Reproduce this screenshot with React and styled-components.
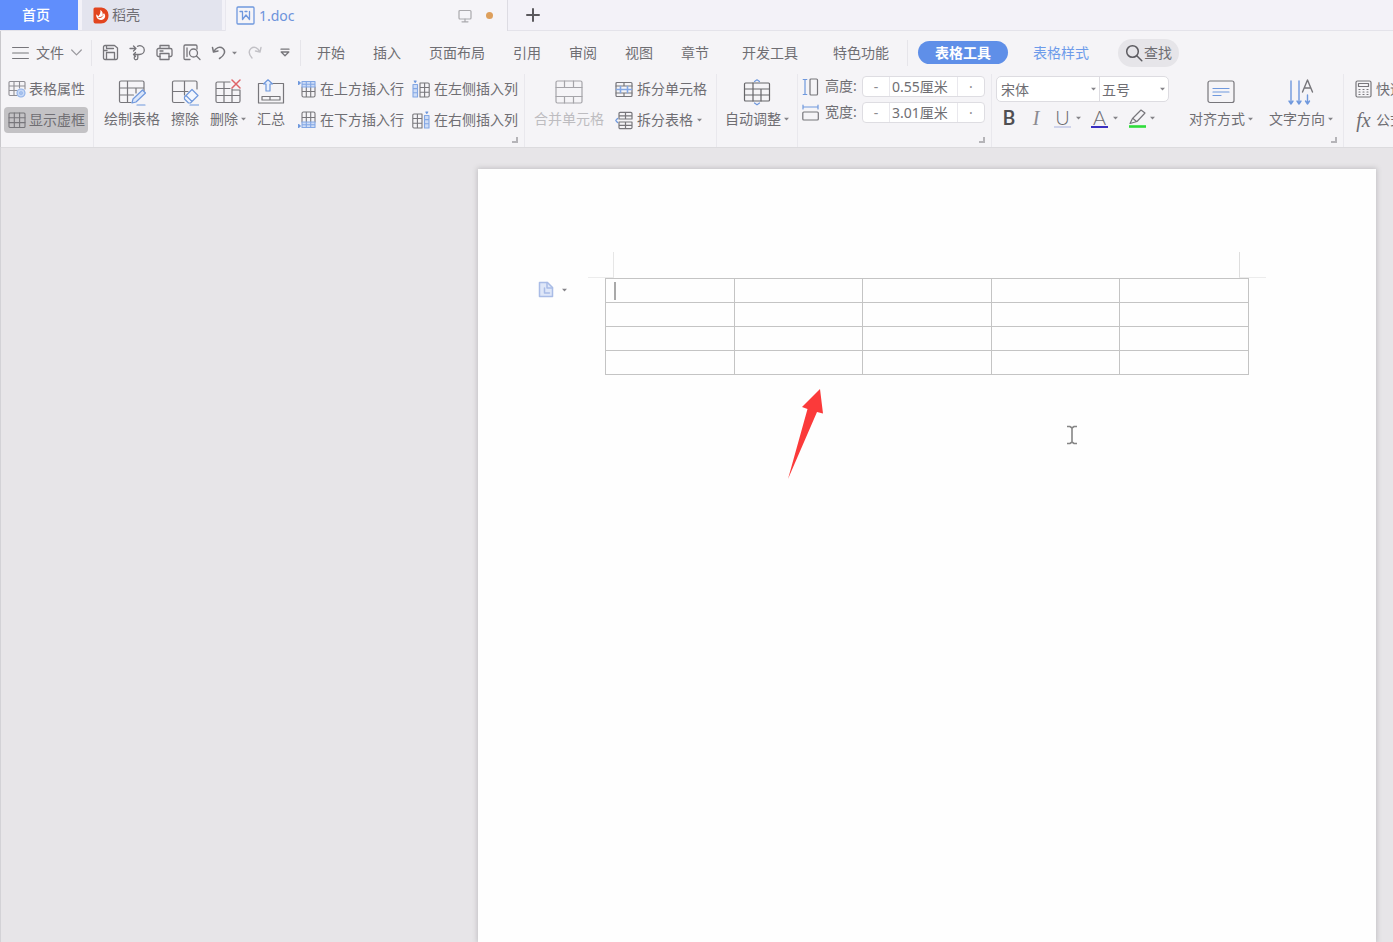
import React from 'react'
import styled, { createGlobalStyle, css } from 'styled-components'

const GlobalStyle = createGlobalStyle`
    * {
        box-sizing: border-box;
    }

    body {
        margin: 0;
        overflow: hidden;
        background-color: #e7e5e8;
    }

    body, button, input, select {
        font-family: "Noto Sans", "Noto Sans CJK SC", sans-serif;
        font-size: 14px;
        color: #6f6e73;
    }

    button {
        padding: 0;
        border: none;
        background: none;
        line-height: 20px;
        white-space: nowrap;
    }
`

const Shell = styled.div`
    display: flex;
    flex-direction: column;
    height: 100vh;
    overflow: hidden;
`

/* ---------- window tabs ---------- */

const TabBar = styled.nav`
    display: flex;
    flex: none;
    height: 31px;
    background-color: #f3f2f8;
    border-bottom: 1px solid #e4e3ea;
`

const HomeTab = styled.button`
    width: 78px;
    padding-right: 6px;
    background-color: #608efc;
    color: white;
    font-weight: 500;
`

const DocerTab = styled.button`
    display: flex;
    align-items: center;
    gap: 3px;
    width: 140px;
    margin-left: 4px;
    padding-left: 11px;
    background-color: #e3e4ee;
`

const FileTab = styled.div`
    display: flex;
    align-items: center;
    width: 283px;
    height: 31px;
    margin-left: 3px;
    padding: 0 14px 0 10px;
    background-color: #f5f4f8;
    border-left: 1px solid #e8e7ee;
    border-right: 1px solid #dddce3;

    button {
        display: flex;
        align-items: center;
        gap: 4px;
        margin-right: auto;
        color: #6d93dc;
    }
`

const UnsavedDot = styled.span`
    width: 7px;
    height: 7px;
    margin-left: 14px;
    border-radius: 50%;
    background-color: #dd9f5c;
`

const NewTab = styled.button`
    display: flex;
    align-items: center;
    padding: 0 18px;
`

/* ---------- menu row ---------- */

const MenuRow = styled.div`
    display: flex;
    flex: none;
    align-items: center;
    height: 43px;
    padding-left: 11px;
    background-color: #f5f4f7;
    border-left: 1px solid #c9c8cc;
`

const FileMenu = styled.button`
    display: flex;
    align-items: center;
    gap: 7px;
    margin-right: 9px;
`

const Divider = styled.span`
    width: 1px;
    height: 26px;
    background-color: #e6e5ea;
`

const QuickAccess = styled.div`
    display: flex;
    align-items: center;
    gap: 10px;
    padding: 0 10px;

    button {
        display: flex;
        align-items: center;
        gap: 5px;
    }
    button:last-child {
        margin-left: 8px;
    }
`

const MenuTabs = styled.div`
    display: flex;
    align-items: center;
    gap: 28px;
    padding-left: 16px;
`

const MoreTabs = styled(MenuTabs)`
    gap: 35px;
    padding: 0 18px 0 33px;
`

const ActiveTab = styled.button`
    height: 23px;
    margin-left: 10px;
    padding: 0 17px;
    border-radius: 12px;
    background-color: #5f8fe8;
    color: white;
    font-weight: 700;
`

const StyleTab = styled.button`
    margin: 0 29px 0 25px;
    color: #6d9bea;
`

const SearchButton = styled.button`
    display: flex;
    align-items: center;
    gap: 1px;
    height: 28px;
    padding: 0 7px;
    border-radius: 14px;
    background-color: #e6e5e9;
`

/* ---------- ribbon ---------- */

const Ribbon = styled.div`
    display: flex;
    flex: none;
    height: 74px;
    background-color: #f5f4f7;
    border-left: 1px solid #c9c8cc;
    border-bottom: 1px solid #dcdbde;
`

const Group = styled.section`
    display: flex;
    flex: none;
    flex-direction: column;
    padding: 2px ${p => p.$right || 6}px 0 ${p => p.$left || 8}px;
    border-right: 1px solid #e9e8ed;
`

const GroupBody = styled.div`
    display: flex;
    gap: ${p => p.$gap || 11}px;
    height: 57px;
    padding-right: ${p => p.$end || 0}px;
`

const Columns = styled.div`
    display: flex;
    gap: ${p => p.$gap || 8}px;
    padding-left: 2px;
`

const Launcher = styled.button`
    align-self: flex-end;
    width: 6px;
    height: 6px;
    margin-top: 4px;
    border-right: 2px solid #b5b4b8;
    border-bottom: 2px solid #b5b4b8;
`

const Stack = styled.div`
    display: flex;
    flex-direction: column;
    gap: 5px;
`

const SmallButton = styled.button`
    display: flex;
    align-items: center;
    gap: 4px;
    height: 26px;

    ${p => p.$padded && css`
        gap: 3px;
        padding: 0 3px 0 4px;
        border-radius: 4px;
    `}
    ${p => p.$pressed && css`
        background-color: #c3c2c5;
    `}
`

const BigButton = styled.button`
    display: flex;
    flex-direction: column;
    align-items: center;
    gap: 3px;
    padding-top: 3px;

    &:disabled {
        color: #bdbcc0;
    }
`

const Label = styled.span`
    display: flex;
    align-items: center;
    gap: 3px;
`

const SizeRow = styled.div`
    display: flex;
    align-items: center;
    height: 21px;

    label {
        width: 37px;
        margin-left: 6px;
        padding-bottom: 2px;
        line-height: 20px;
        white-space: nowrap;
    }
`

const Spinner = styled.div`
    display: flex;
    width: 123px;
    height: 21px;
    border: 1px solid #dedde2;
    border-radius: 4px;
    background-color: white;
    overflow: hidden;

    button {
        width: 26px;
        line-height: 18px;
        color: #8d8c90;
    }

    input {
        flex: 1;
        min-width: 0;
        padding: 0 2px 2px;
        border: 1px solid #e9e8ed;
        border-width: 0 1px;
        outline: none;
    }
`

const FontBoxes = styled.div`
    display: flex;
    height: 26px;
    border: 1px solid #dddce1;
    border-radius: 5px;
    background-color: white;
    overflow: hidden;
`

const SelectBox = styled.div`
    display: flex;
    align-items: center;
    width: ${p => p.$width}px;
    padding-right: 3px;

    & + & {
        border-left: 1px solid #dddce1;
    }

    select {
        flex: 1;
        min-width: 0;
        padding: 0 ${p => p.$inset}px;
        border: none;
        outline: none;
        appearance: none;
        background: none;
    }
`

const FormatRow = styled.div`
    display: flex;
    align-items: center;
    height: 22px;
`

const FormatButton = styled.button`
    display: flex;
    align-items: center;
    width: ${p => (p.$menu ? 37 : 27)}px;
    height: 22px;
`

const Glyph = styled.span`
    width: 26px;
    text-align: center;
    line-height: 22px;
    font-size: 20px;
    font-weight: ${p => (p.$bold ? 500 : 400)};
    font-family: ${p => (p.$serif ? '"Liberation Serif", serif' : 'Roboto, sans-serif')};
    font-style: ${p => (p.$serif ? 'italic' : 'normal')};
    color: ${p => (p.$bold ? '#4f4e52' : '#8b8a90')};
`

const Underlined = styled.span`
    width: 17px;
    height: 20px;
    margin: 0 5px 0 4px;
    border-bottom: 2px solid ${p => p.$color};
    text-align: center;
    font-family: Lato, sans-serif;
    font-size: 20px;
    font-weight: 300;
    line-height: 18px;
    color: #6c6b71;
`

const Fx = styled.span`
    width: 17px;
    font-family: "Liberation Serif", serif;
    font-style: italic;
    font-size: 20px;
`

/* ---------- document ---------- */

const Canvas = styled.main`
    display: flex;
    flex: 1;
    justify-content: flex-end;
    padding: 21px 17px 0 0;
    border-left: 1px solid #d3d2d6;
    background-color: #e7e5e8;
`

const Page = styled.article`
    position: relative;
    width: 898px;
    padding: 83px 110px 0;
    background-color: #fefefe;
    box-shadow: 0 0 5px 1px #c2c1c4;
`

const CropMarks = styled.div`
    display: flex;
    justify-content: space-between;

    span {
        width: 26px;
        height: 26px;
        border-bottom: 1px solid #ececec;
    }
    span:first-child {
        border-right: 1px solid #e6e6e6;
    }
    span:last-child {
        width: 27px;
        border-left: 1px solid #dedede;
    }
`

const TableArea = styled.div`
    position: relative;
    margin: 0 17px;
`

const DocTable = styled.table`
    width: 100%;
    table-layout: fixed;
    border-collapse: collapse;

    tr {
        height: 24px;
    }

    td {
        padding: 0 8px;
        border: 1px solid #c4c4c4;
    }
`

const TextCaret = styled.span`
    display: block;
    width: 2px;
    height: 18px;
    background-color: #a9a9a9;
`

const PasteOptions = styled.button`
    position: absolute;
    top: 3px;
    left: -67px;
    display: flex;
    align-items: center;
    gap: 8px;
`

const Overlay = styled.svg`
    position: absolute;
    top: ${p => p.$top}px;
    left: ${p => p.$left}px;
`

/* ---------- icons ---------- */

const Icon = ({ w, h, children, color = '#77767b', width = 1.2 }) => (
    <svg width={w} height={h} viewBox={`0 0 ${w} ${h}`} fill="none" stroke={color} strokeWidth={width} strokeLinejoin="round" strokeLinecap="round" aria-hidden="true">
        {children}
    </svg>
)

const BLUE = '#6f98dd'

const Caret = () => (
    <svg width="5" height="4" viewBox="0 0 5 4" aria-hidden="true">
        <path d="M0 .8h5L2.500 3.500z" fill="#858489" />
    </svg>
)

const MenuIcon = () => <Icon w={17} h={14}><path d="M.6 1.500h15.800M.6 7h15.800M.6 12.500h15.800" /></Icon>
const ChevronIcon = () => <Icon w={11} h={7} color="#9a999e"><path d="M.7 1l4.800 4.800L10.300 1" /></Icon>
const PlusIcon = () => <Icon w={14} h={14} color="#5a595d" width={2}><path d="M7 1v12M1 7h12" /></Icon>

const DocerIcon = () => (
    <svg width="16" height="17" viewBox="0 0 16 17" aria-hidden="true">
        <path d="M2 .5h6.500a7.500 7.500 0 0 1 7 8c0 4.500-3 8-7.500 8H2.500a2 2 0 0 1-2-2V2a1.500 1.500 0 0 1 1.500-1.500z" fill="#e2451f" />
        <path d="M7.300 3c2.200 1.200 2.700 3 2.200 4.700.8-.3 1.200-.9 1.400-1.600C13.600 9 11.800 13 8 13c-3 0-5-2.200-4.800-5.400 1 .2 1.600.9 2 1.900C7 7.800 7.800 5.500 7.300 3z" fill="#fff" />
        <path d="M5.500 10.500c2 .3 3.500-.3 4.500-2" fill="none" stroke="#e2451f" strokeWidth=".9" />
    </svg>
)

const WordIcon = () => (
    <Icon w={19} h={19} color={BLUE} width={1.3}>
        <rect x="1" y="1" width="17" height="17" rx="1" />
        <path d="M4 5.500h2.500v8l3.500-4.500 3.500 4.500v-8M9 5.500h2" />
    </Icon>
)

const MonitorIcon = () => (
    <Icon w={14} h={14} color="#aaa9ad">
        <rect x="1" y="1.500" width="12" height="8.500" rx="1" />
        <path d="M7 10v2.500M4 12.800h6" />
    </Icon>
)

const SaveIcon = () => (
    <Icon w={17} h={17} width={1.3}>
        <path d="M1.500 3A1.500 1.500 0 0 1 3 1.500h9.500L15.500 4v10a1.500 1.500 0 0 1-1.500 1.500H3A1.500 1.500 0 0 1 1.500 14zM4.500 1.800V4.500h7M1.500 6.500h3.500M4.500 15.200V8.500h8v6.700" />
    </Icon>
)

const RecallIcon = () => (
    <Icon w={17} h={17} width={1.3}>
        <path d="M1 4.500h6M4.500 2L7 4.500 4.500 7M8.500 2.300C11.500 .8 15.300 2.500 15.300 6c0 2.800-2.300 4.500-5 4.500H4.500M6.500 8.500l-2 2 2 2M8.800 10.500v3.500a1.800 1.800 0 1 1-2.300-1.800" />
    </Icon>
)

const PrintIcon = () => (
    <Icon w={17} h={17} width={1.3}>
        <path d="M4 4.500V1.500h9v3M4 12.500H2.500A1.500 1.500 0 0 1 1 11V6A1.500 1.500 0 0 1 2.500 4.500h12A1.500 1.500 0 0 1 16 6v5a1.500 1.500 0 0 1-1.500 1.500H13" />
        <path d="M4 9.500h9v6H4zM4 7h3" />
    </Icon>
)

const PreviewIcon = () => (
    <Icon w={18} h={17} width={1.3}>
        <path d="M7 15.500H2.200A1.200 1.200 0 0 1 1 14.300V2.200A1.200 1.200 0 0 1 2.200 1h10.600A1.200 1.200 0 0 1 14 2.200V5M4 4v8.500" />
        <circle cx="10.500" cy="9" r="4" />
        <path d="M13.500 12l3.500 3.500" />
    </Icon>
)

const UndoIcon = () => <Icon w={16} h={15} width={1.5}><path d="M1.500 2.500l1 4.500 4.500-1M2.700 6.800C4.500 2.500 9 1 12 3.500c2.800 2.500 2 6.500-3.500 10" /></Icon>
const RedoIcon = () => <Icon w={15} h={15} color="#c2c1c6" width={1.4}><path d="M14 2.500l-1 4.500-4.500-1M12.800 6.800C11 2.500 7 1 4 3.500c-2.800 2.500-2 6 1 9.500" /></Icon>
const OverflowIcon = () => <Icon w={10} h={9} width={1.3}><path d="M1 1.200h8M1.200 4h7.600L5 7.700z" /></Icon>
const SearchIcon = () => <Icon w={18} h={18} color="#5c5b60" width={1.5}><circle cx="7.500" cy="7.500" r="5.800" /><path d="M11.800 11.800l5 5" /></Icon>

const PropertiesIcon = () => (
    <Icon w={18} h={18} color="#8f8e94" width={1.1}>
        <path d="M9 15.500H2A1 1 0 0 1 1 14.500V2.500A1 1 0 0 1 2 1.500h14a1 1 0 0 1 1 1V9M1 6h16M1 10.500h8M6 1.500v14M11.500 1.500V8" />
        <circle cx="13" cy="13" r="4" stroke="#8fb0e8" fill="#c7d8f5" />
        <circle cx="13" cy="13" r="1.300" stroke="#8fb0e8" />
    </Icon>
)

const GridIcon = () => (
    <Icon w={18} h={17} color="#77767b" width={1.1}>
        <rect x="1" y="1" width="16" height="14.500" rx="1" />
        <path d="M1 5.800h16M1 10.600h16M6.300 1v14.500M11.600 1v14.500" />
    </Icon>
)

const DrawTableIcon = () => (
    <Icon w={28} h={27}>
        <path d="M13 23.500H3A1.500 1.500 0 0 1 1.500 22V3.500A1.500 1.500 0 0 1 3 2h21.500A1.500 1.500 0 0 1 26 3.500V12M1.500 9H26M1.500 16h14M9.500 2v21.500M18 9v5" />
        <path d="M14 24l1-4L24.500 11l3 3L18 23zM19 26h8" stroke={BLUE} fill="#dbe6fa" />
    </Icon>
)

const EraseIcon = () => (
    <Icon w={28} h={27}>
        <path d="M13 23.500H3A1.500 1.500 0 0 1 1.500 22V3.500A1.500 1.500 0 0 1 3 2h21.500A1.500 1.500 0 0 1 26 3.500V10M1.500 12.500H17M13.500 2v14" />
        <path d="M21 10.500l6 6-7.500 7.500h-2l-4-4V18zM15 16.500l6 6M19 26h8.500" stroke={BLUE} fill="#f2f6fd" />
    </Icon>
)

const DeleteIcon = () => (
    <Icon w={28} h={27}>
        <path d="M16 3H3.500A1.500 1.500 0 0 0 2 4.500V22a1.500 1.500 0 0 0 1.500 1.500h21A1.500 1.500 0 0 0 26 22V11M2 9.500h14M2 16.500h24M10 3v20.500M18 10v13.500M18 11h8" />
        <path d="M18 1l8 8M26 1l-8 8" stroke="#df6468" strokeWidth="1.500" />
    </Icon>
)

const SummaryIcon = () => (
    <Icon w={28} h={27}>
        <path d="M7 4.500H1.500V24h25V4.500H15.500M5 17.500h18v3.500H5zM13 17.500V21" />
        <path d="M11 .8L15.500 5H13v7H9V5H6.500z" stroke={BLUE} fill="#e9f0fc" />
    </Icon>
)

// row icons share one drawing, flipped for "below"
const RowIcon = ({ below }) => (
    <Icon w={18} h={18} width={1.1}>
        <g transform={below ? 'translate(0 18) scale(1 -1)' : undefined}>
            <path d="M4 7v8.500a1.500 1.500 0 0 0 1.500 1.500h10a1.500 1.500 0 0 0 1.500-1.500V7M4 11.500h13M8.300 7v10M12.700 7v10" />
            <path d="M4 1.500h13V7H4zM4 4.300h13M8.300 1.500V7M12.700 1.500V7" stroke="#83a7e4" fill="#cfddf6" />
            <path d="M.5 1.500l1.800 1.500-1.800 1.500z" stroke={BLUE} fill={BLUE} />
        </g>
    </Icon>
)

const ColumnIcon = ({ right }) => (
    <Icon w={18} h={18} width={1.1}>
        <g transform={right ? 'translate(18 0) scale(-1 1)' : undefined}>
            <path d="M8 3h8a1.200 1.200 0 0 1 1.200 1.200v11.600A1.200 1.200 0 0 1 16 17H8zM12.600 3v14M8 7.500h9M8 12.300h9" />
            <path d="M1 4.500h4.500V17H1zM1 8.600h4.500M1 12.800h4.500" stroke="#83a7e4" fill="#cfddf6" />
            <path d="M2.200 1h2L3.200 2.500z" stroke={BLUE} fill={BLUE} />
        </g>
    </Icon>
)

const MergeIcon = () => (
    <Icon w={28} h={27} color="#a5a4a9">
        <rect x="1" y="2" width="26" height="22" rx="1.500" />
        <path d="M1 8.500h26M1 17.500h26M9.500 2v6.500M18.500 2v6.500M9.500 17.500V24M18.500 17.500V24" />
    </Icon>
)

const SplitCellIcon = () => (
    <Icon w={18} h={17}>
        <rect x="1" y="1.500" width="16" height="14" rx="1" />
        <path d="M1 5h16M1 12h16M9 1.500V5M9 12v3.500" />
        <path d="M1.500 8.500h15M5.500 5.500v6M12.500 5.500v6" stroke="#83a7e4" strokeWidth="1.600" />
    </Icon>
)

const SplitTableIcon = () => (
    <Icon w={18} h={19}>
        <path d="M4 8V2.500A1.200 1.200 0 0 1 5.200 1.300h10.600A1.200 1.200 0 0 1 17 2.500V8zM4 11v5.500a1.200 1.200 0 0 0 1.200 1.200h10.600a1.200 1.200 0 0 0 1.200-1.200V11zM4 4.800h13M4 14.300h13M10.500 1.300V8M10.500 11v6.700" />
        <path d="M2.500 7.500L.8 9.500l1.700 2" stroke={BLUE} />
    </Icon>
)

const AutoFitIcon = () => (
    <Icon w={28} h={27} color="#67666a">
        <rect x="1.500" y="4" width="25" height="18" rx="1" />
        <path d="M1.500 10h25M1.500 16h25M10 4v18M18 10v12" />
        <path d="M11.500 2.500L14 .8l2.500 1.700M11.500 24l2.500 1.800 2.500-1.800" stroke={BLUE} />
    </Icon>
)

const HeightIcon = () => (
    <Icon w={17} h={18}>
        <rect x="8" y="1" width="7.500" height="16" rx="1" />
        <path d="M3 1.500v15M1.200 1.500h3.600M1.200 16.500h3.600" stroke={BLUE} />
    </Icon>
)

const WidthIcon = () => (
    <Icon w={17} h={18}>
        <rect x=".8" y="8" width="15.500" height="8" rx="1" />
        <path d="M1 3h15M1 1v4M16 1v4" stroke={BLUE} />
    </Icon>
)

const MarkerIcon = () => (
    <svg width="26" height="20" viewBox="0 0 26 20" fill="none" stroke="#77767b" strokeWidth="1.200" strokeLinejoin="round" aria-hidden="true">
        <path d="M6 15.500l2.500-5L17 2l4 3-8 8.500zM9 10.500l3.500 3" />
        <path d="M5 18.500h17" stroke="#2fdc3a" strokeWidth="2.600" />
    </svg>
)

const AlignIcon = () => (
    <Icon w={28} h={27}>
        <rect x="1" y="2" width="26" height="21.500" rx="2" />
        <path d="M6 9.500h16M6 13h16M6 16.500h8" stroke={BLUE} />
    </Icon>
)

const DirectionIcon = () => (
    <Icon w={28} h={27} width={1.4}>
        <path d="M4 2v22M2 22l2 3 2-3M12 2v22M10 22l2 3 2-3M20.500 16v8M18.500 22l2 3 2-3" stroke={BLUE} />
        <path d="M15.500 13L20.500 1l5 12M17.300 9h6.400" />
    </Icon>
)

const CalcIcon = () => (
    <Icon w={17} h={18}>
        <rect x="1" y="1" width="15" height="16" rx="1.500" />
        <path d="M3.500 3.500h10v3h-10zM4 9.500h1M8 9.500h1M12 9.500h1M4 12h1M8 12h1M12 12h1M4 14.500h1M8 14.500h1M12 14.500h1" />
    </Icon>
)

const PasteIcon = () => (
    <Icon w={16} h={17} color="#a9bce6" width={1.5}>
        <path d="M1.500 1.500h8l5 5v9h-13z" fill="#dfe7f8" />
        <path d="M9 1.500v5.500h5.500M6.500 7v5h5" />
    </Icon>
)

/* ---------- composed parts ---------- */

const Big = ({ icon, text, menu, disabled }) => (
    <BigButton disabled={disabled}>
        {icon}
        <Label>{text}{menu && <Caret />}</Label>
    </BigButton>
)

const SizeField = ({ id, icon, label, value }) => (
    <SizeRow>
        {icon}
        <label htmlFor={id}>{label}:</label>
        <Spinner>
            <button aria-label={`${label} -`}>-</button>
            <input id={id} defaultValue={value} />
            <button aria-label={`${label} +`}>·</button>
        </Spinner>
    </SizeRow>
)

const menuTabs = ['开始', '插入', '页面布局', '引用', '审阅', '视图', '章节']
const moreTabs = ['开发工具', '特色功能']

const Tabs = () => (
    <TabBar>
        <HomeTab>首页</HomeTab>
        <DocerTab><DocerIcon />稻壳</DocerTab>
        <FileTab>
            <button><WordIcon />1.doc</button>
            <MonitorIcon />
            <UnsavedDot />
        </FileTab>
        <NewTab aria-label="新建"><PlusIcon /></NewTab>
    </TabBar>
)

const Menu = () => (
    <MenuRow>
        <FileMenu><MenuIcon />文件<ChevronIcon /></FileMenu>
        <Divider />
        <QuickAccess>
            <button aria-label="保存"><SaveIcon /></button>
            <button aria-label="输出"><RecallIcon /></button>
            <button aria-label="打印"><PrintIcon /></button>
            <button aria-label="打印预览"><PreviewIcon /></button>
            <button aria-label="撤销"><UndoIcon /><Caret /></button>
            <button aria-label="恢复"><RedoIcon /></button>
            <button aria-label="更多"><OverflowIcon /></button>
        </QuickAccess>
        <Divider />
        <MenuTabs>
            {menuTabs.map(tab => <button key={tab}>{tab}</button>)}
        </MenuTabs>
        <MoreTabs>
            {moreTabs.map(tab => <button key={tab}>{tab}</button>)}
        </MoreTabs>
        <Divider />
        <ActiveTab>表格工具</ActiveTab>
        <StyleTab>表格样式</StyleTab>
        <SearchButton><SearchIcon />查找</SearchButton>
    </MenuRow>
)

const Tools = () => (
    <Ribbon>
        <Group $left={3} $right={5}>
            <Stack>
                <SmallButton $padded><PropertiesIcon />表格属性</SmallButton>
                <SmallButton $padded $pressed><GridIcon />显示虚框</SmallButton>
            </Stack>
        </Group>
        <Group $left={10}>
            <GroupBody>
                <Big icon={<DrawTableIcon />} text="绘制表格" />
                <Big icon={<EraseIcon />} text="擦除" />
                <Big icon={<DeleteIcon />} text="删除" menu />
                <Big icon={<SummaryIcon />} text="汇总" />
                <Columns>
                    <Stack>
                        <SmallButton><RowIcon />在上方插入行</SmallButton>
                        <SmallButton><RowIcon below />在下方插入行</SmallButton>
                    </Stack>
                    <Stack>
                        <SmallButton><ColumnIcon />在左侧插入列</SmallButton>
                        <SmallButton><ColumnIcon right />在右侧插入列</SmallButton>
                    </Stack>
                </Columns>
            </GroupBody>
            <Launcher aria-label="表格选项" />
        </Group>
        <Group $left={9} $right={9}>
            <GroupBody>
                <Big icon={<MergeIcon />} text="合并单元格" disabled />
                <Stack>
                    <SmallButton><SplitCellIcon />拆分单元格</SmallButton>
                    <SmallButton><SplitTableIcon />拆分表格<Caret /></SmallButton>
                </Stack>
            </GroupBody>
        </Group>
        <Group $right={8}>
            <GroupBody>
                <Big icon={<AutoFitIcon />} text="自动调整" menu />
            </GroupBody>
        </Group>
        <Group $left={4} $right={6}>
            <GroupBody>
                <Stack>
                    <SizeField id="row-height" icon={<HeightIcon />} label="高度" value="0.55厘米" />
                    <SizeField id="col-width" icon={<WidthIcon />} label="宽度" value="3.01厘米" />
                </Stack>
            </GroupBody>
            <Launcher aria-label="单元格大小" />
        </Group>
        <Group $left={4} $right={6}>
            <GroupBody $gap={18} $end={4}>
                <Stack>
                    <FontBoxes>
                        <SelectBox $width={102} $inset={4}>
                            <select aria-label="字体"><option>宋体</option></select>
                            <Caret />
                        </SelectBox>
                        <SelectBox $width={69} $inset={2}>
                            <select aria-label="字号"><option>五号</option></select>
                            <Caret />
                        </SelectBox>
                    </FontBoxes>
                    <FormatRow>
                        <FormatButton><Glyph $bold>B</Glyph></FormatButton>
                        <FormatButton><Glyph $serif>I</Glyph></FormatButton>
                        <FormatButton $menu><Underlined $color="#cfd3ea">U</Underlined><Caret /></FormatButton>
                        <FormatButton $menu><Underlined $color="#3a2fc0">A</Underlined><Caret /></FormatButton>
                        <FormatButton $menu aria-label="突出显示"><MarkerIcon /><Caret /></FormatButton>
                    </FormatRow>
                </Stack>
                <Columns $gap={16}>
                    <Big icon={<AlignIcon />} text="对齐方式" menu />
                    <Big icon={<DirectionIcon />} text="文字方向" menu />
                </Columns>
            </GroupBody>
            <Launcher aria-label="字体选项" />
        </Group>
        <Group $left={11}>
            <Stack>
                <SmallButton><CalcIcon />快速计算</SmallButton>
                <SmallButton><Fx>fx</Fx>公式</SmallButton>
            </Stack>
        </Group>
    </Ribbon>
)

const Document = () => (
    <Canvas>
        <Page>
            <CropMarks><span /><span /></CropMarks>
            <TableArea>
                <PasteOptions aria-label="粘贴选项"><PasteIcon /><Caret /></PasteOptions>
                <DocTable>
                    <tbody>
                        {[0, 1, 2, 3].map(row => (
                            <tr key={row}>
                                {[0, 1, 2, 3, 4].map(col => (
                                    <td key={col}>{row === 0 && col === 0 && <TextCaret />}</td>
                                ))}
                            </tr>
                        ))}
                    </tbody>
                </DocTable>
            </TableArea>
            <Overlay $top={219} $left={309} width="38" height="92" viewBox="0 0 38 92">
                <path d="M33 1L15 19l5.500 2L1 91 30 24l6 1.500z" fill="#fb3a3a" />
            </Overlay>
            <Overlay $top={256} $left={588} width="12" height="20" viewBox="0 0 12 20" fill="none" stroke="#858585" strokeWidth="1.600">
                <path d="M1 1.500h3L6 3l2-1.500h3M6 3v14M1 18.500h3L6 17l2 1.500h3" />
            </Overlay>
        </Page>
    </Canvas>
)

const App = () => (
    <Shell>
        <GlobalStyle />
        <Tabs />
        <Menu />
        <Tools />
        <Document />
    </Shell>
)

export default App
